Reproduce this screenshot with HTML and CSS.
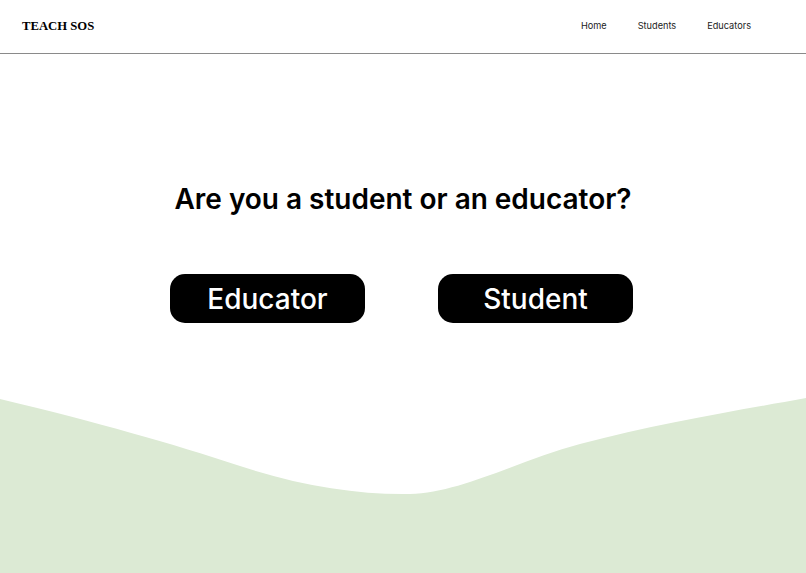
FILE: index.html
```html
<!DOCTYPE html>
<html lang="en">
<head>
<meta charset="utf-8">
<title>Teach SOS</title>
<link rel="stylesheet" href="styles.css">
</head>
<body>
<div class="page">
  <header class="header">
    <div class="logo">TEACH SOS</div>
    <nav class="nav">
      <a href="#">Home</a>
      <a href="#">Students</a>
      <a href="#">Educators</a>
    </nav>
  </header>
  <main class="hero">
    <h1 class="title">Are you a student or an educator?</h1>
    <div class="choices">
      <a class="choice" href="#">Educator</a>
      <a class="choice" href="#">Student</a>
    </div>
  </main>
  <svg class="wave" viewBox="0 0 806 175" preserveAspectRatio="none" aria-hidden="true">
    <path d="M0,1 C100,25 170,45 240,68 C300,88 360,97 410,96 C460,95 520,62 580,46 C660,25 740,12 806,0 L806,175 L0,175 Z" fill="#dcead4"/>
  </svg>
</div>
</body>
</html>
```
FILE: styles.css
```css
html, body {
  margin: 0;
  padding: 0;
  background: #ffffff;
}
body {
  font-family: Inter, "Noto Sans", sans-serif;
  color: #000;
}
.page {
  display: flex;
  flex-direction: column;
  min-height: 573px;
  overflow: hidden;
}
.header {
  height: 53px;
  border-bottom: 1px solid #8a8a8a;
  display: flex;
  align-items: center;
  justify-content: space-between;
  padding: 0 55px 0 22px;
}
.logo {
  font-family: "Liberation Serif", "DejaVu Serif", serif;
  font-weight: 700;
  font-size: 12.7px;
  margin-top: -1px;
}
.nav {
  display: flex;
  gap: 31px;
  margin-top: -2px;
}
.nav a {
  font-size: 9.2px;
  color: #222;
  text-decoration: none;
}
.hero {
  flex: 1;
  display: flex;
  flex-direction: column;
  align-items: center;
  padding-top: 128px;
}
.title {
  margin: 0;
  font-size: 28px;
  font-weight: 600;
  line-height: 34px;
  letter-spacing: -0.02px;
}
.choices {
  display: flex;
  gap: 73px;
  margin-top: 58px;
  margin-left: -3px;
}
.choice {
  width: 195px;
  height: 49px;
  border-radius: 15px;
  background: #000;
  color: #fff;
  text-decoration: none;
  display: flex;
  align-items: center;
  justify-content: center;
  font-size: 28px;
  font-weight: 500;
}
.wave {
  display: block;
  width: 100%;
  height: 175px;
  margin-top: -1px;
}
```
